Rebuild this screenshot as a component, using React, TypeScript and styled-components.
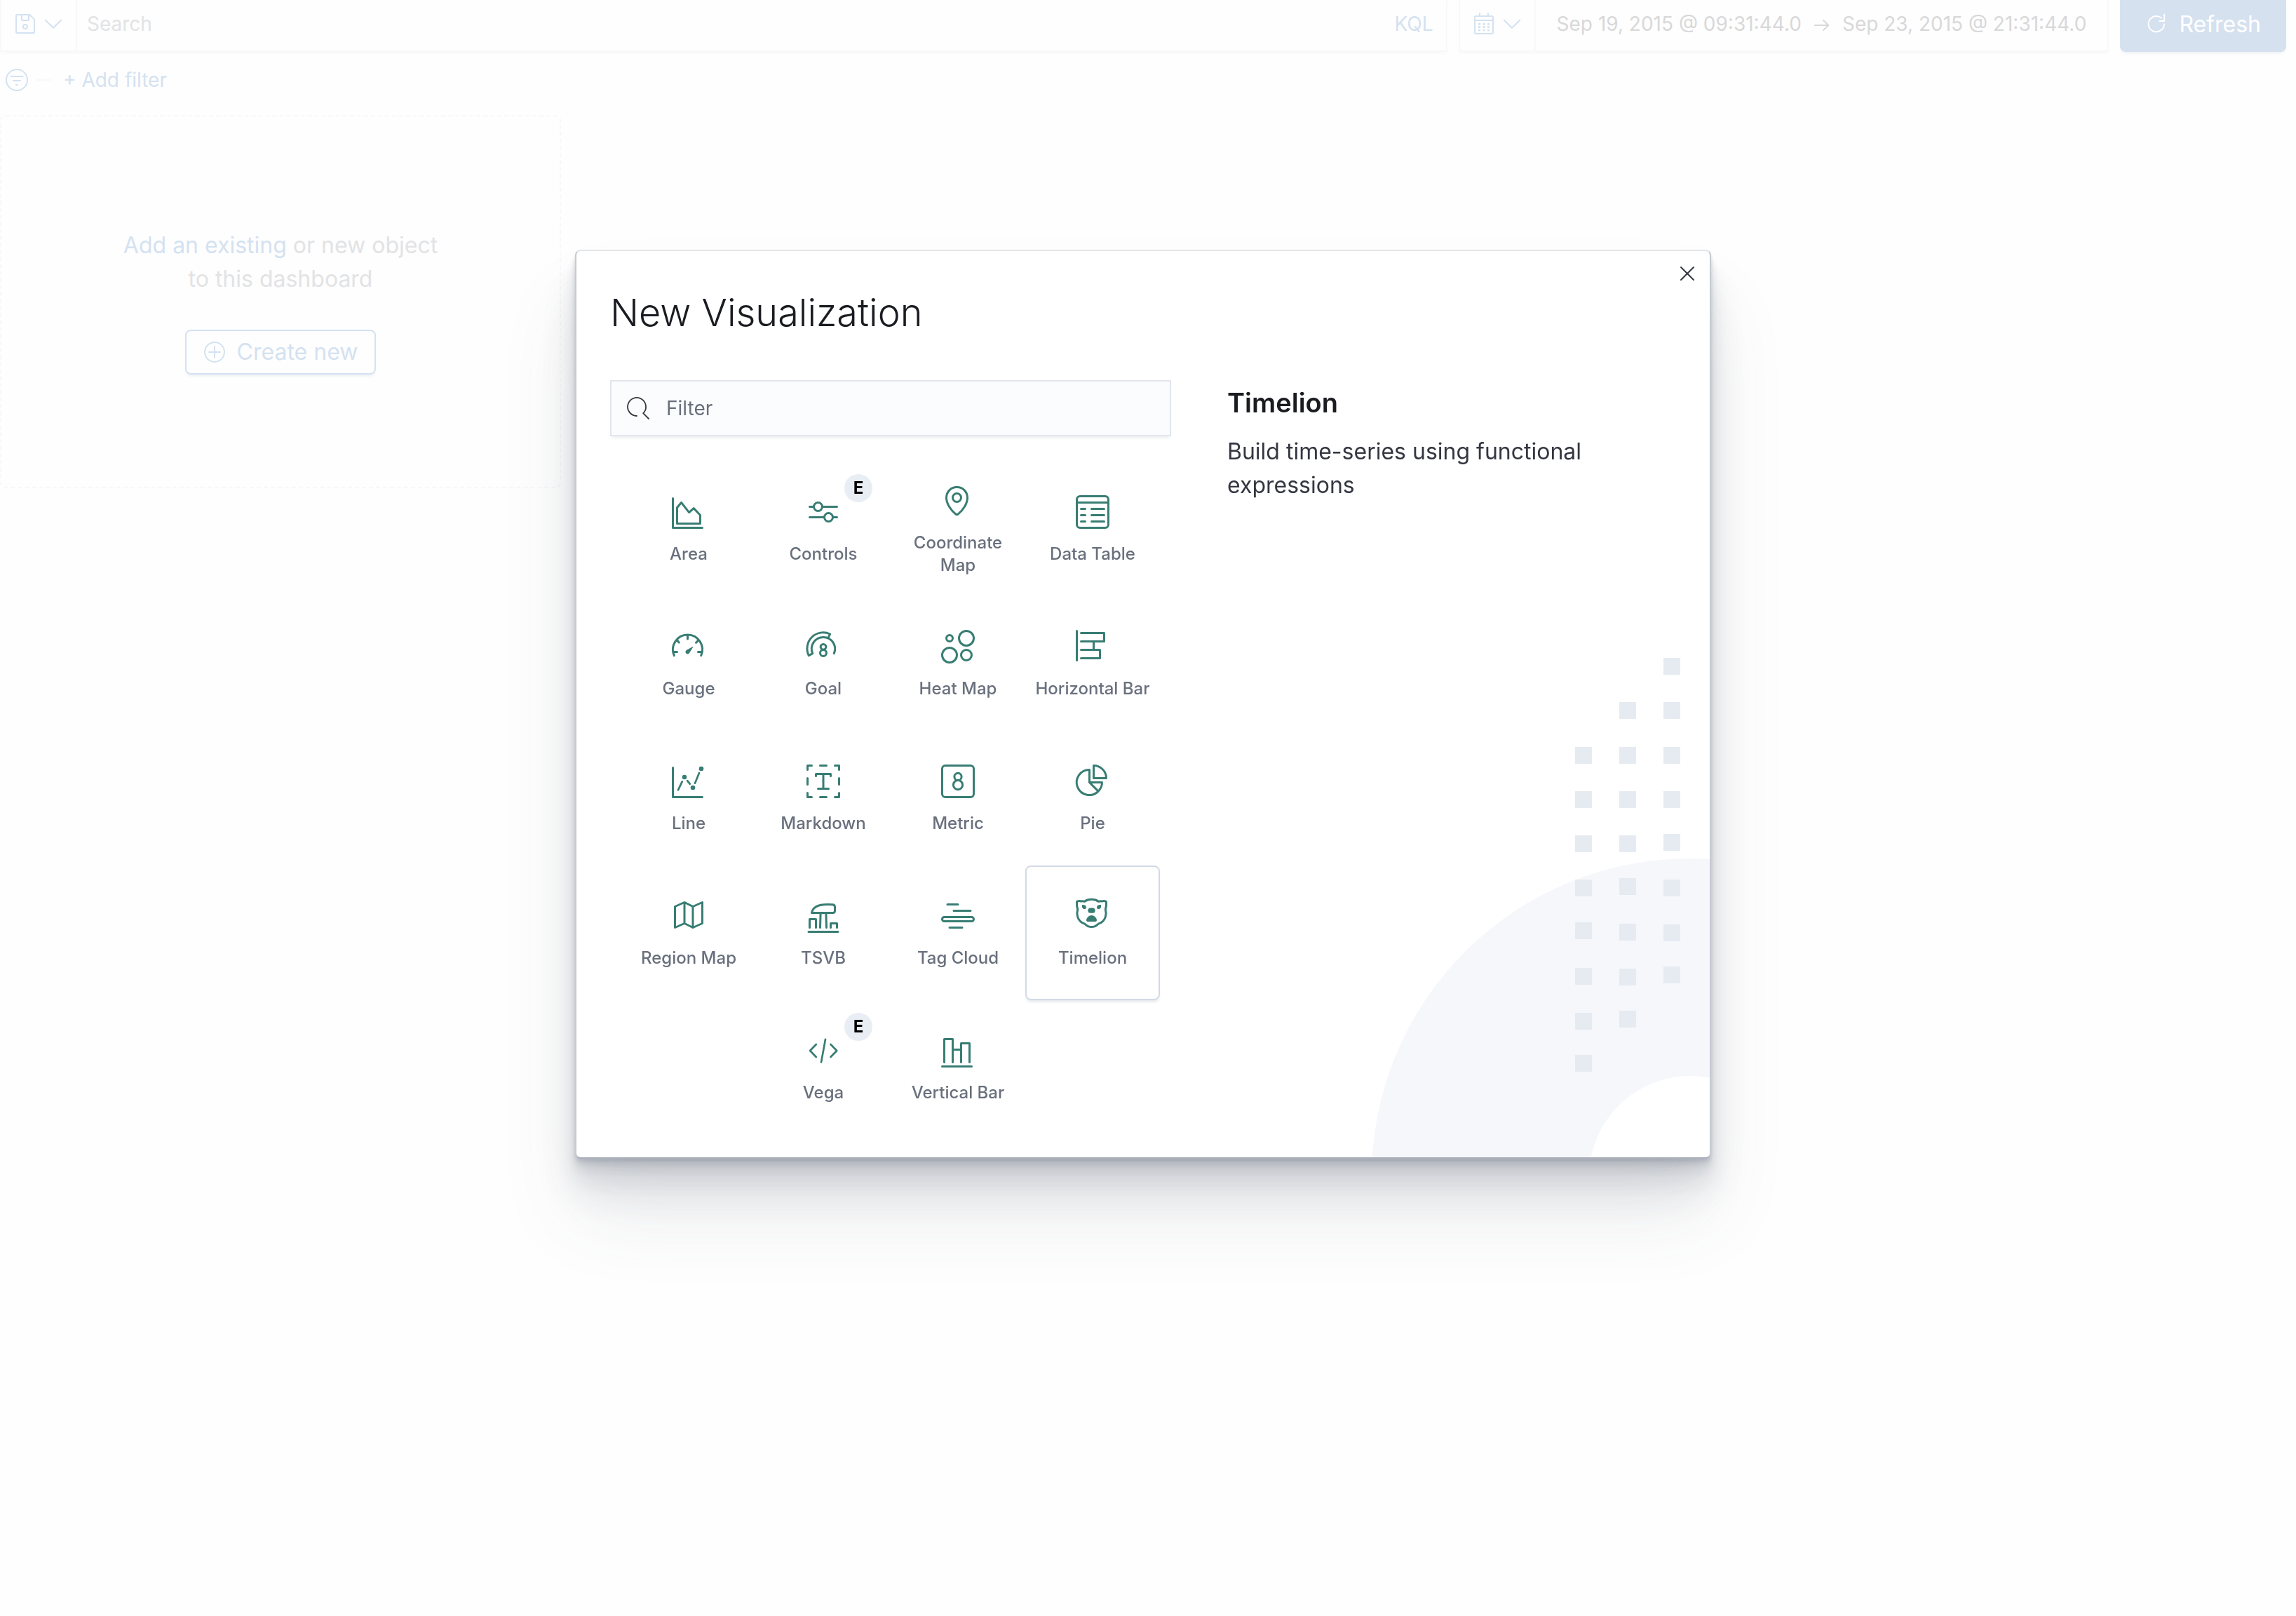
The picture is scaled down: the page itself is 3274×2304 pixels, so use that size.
import React, { useState } from "react";
import styled, { createGlobalStyle } from "styled-components";

const color = {
  page: "#fefefe",
  faintBorder: "#f8f8f9",
  fadedBlue: "#d4e2f1",
  fadedText: "#e2e3e5",
  fadedDate: "#d8d8d9",
  title: "#1a1c21",
  text: "#343741",
  subdued: "#69707d",
  teal: "#387d73",
  fieldBorder: "#e4e6ee",
};

const GlobalStyle = createGlobalStyle`
  *, *::before, *::after { box-sizing: border-box; }
  body {
    margin: 0;
    background: ${color.page};
    color: ${color.text};
    font-family: Inter, "Liberation Sans", sans-serif;
    font-size: 28px;
  }
  button, input { font: inherit; color: inherit; }
  button { background: none; border: 0; padding: 0; cursor: pointer; }
  h1, h2, p, ul { margin: 0; padding: 0; }
  ul { list-style: none; }
`;

/* ---------- Page behind the dialog ---------- */

const Page = styled.div`
  min-height: 100vh;
  padding-right: 14px;
`;

const QueryBar = styled.div`
  display: flex;
  gap: 16px;
  height: 74px;
`;

const Group = styled.div`
  display: flex;
  border: 2px solid ${color.faintBorder};
  border-top: 0;
  box-shadow: 0 4px 4px -2px rgba(150, 150, 160, 0.06);
`;

const SearchGroup = styled(Group)`
  flex: 1;
`;

const DateGroup = styled(Group)`
  flex: none;
`;

const MenuTrigger = styled.button`
  display: flex;
  align-items: center;
  gap: 8px;
  padding: 0 16px 4px 18px;
  border-right: 2px solid ${color.faintBorder};
  color: ${color.fadedBlue};
`;

const SearchInput = styled.input`
  flex: 1;
  min-width: 0;
  border: 0;
  outline: 0;
  background: none;
  padding: 0 14px 4px;
  &::placeholder { color: ${color.fadedText}; opacity: 1; }
`;

const LanguageButton = styled.button`
  padding: 0 18px 4px;
  color: ${color.fadedBlue};
`;

const DateRange = styled.div`
  display: flex;
  align-items: center;
  justify-content: center;
  gap: 18px;
  padding: 0 30px 4px;
  color: ${color.fadedDate};
`;

const RefreshButton = styled.button`
  display: flex;
  align-items: center;
  justify-content: center;
  gap: 16px;
  flex: none;
  padding: 0 36px 6px;
  border-radius: 0 0 8px 8px;
  background: #d5e1ef;
  color: #fff;
  font-size: 32px;
  box-shadow: 0 4px 4px -2px rgba(120, 140, 170, 0.12);
`;

const FilterBar = styled.div`
  display: flex;
  align-items: center;
  height: 80px;
  margin-bottom: 10px;
  padding-left: 8px;
  gap: 12px;
  color: ${color.fadedBlue};
`;

const IconButton = styled.button`
  display: flex;
`;

const FilterRule = styled.span`
  width: 20px;
  height: 2px;
  background: ${color.faintBorder};
`;

const AddFilterButton = styled.button`
  margin-left: 6px;
`;

const EmptyPanel = styled.section`
  display: flex;
  flex-direction: column;
  align-items: center;
  justify-content: center;
  gap: 48px;
  width: 800px;
  max-width: 100%;
  height: 532px;
  border: 2px dashed ${color.faintBorder};
  border-radius: 8px;
  font-size: 32px;
  line-height: 48px;
  color: ${color.fadedText};
`;

const EmptyText = styled.p`
  text-align: center;
`;

const FadedLink = styled.a`
  color: ${color.fadedBlue};
  text-decoration: none;
`;

const CreateButton = styled.button`
  display: flex;
  align-items: center;
  gap: 16px;
  height: 64px;
  padding: 0 24px;
  border: 2px solid ${color.fadedBlue};
  border-radius: 8px;
  color: ${color.fadedBlue};
  box-shadow: 0 4px 4px -2px rgba(120, 140, 170, 0.15);
`;

/* ---------- Dialog ---------- */

const Overlay = styled.div`
  position: fixed;
  inset: 0;
  display: flex;
  align-items: center;
  justify-content: center;
  padding: 0 14px 296px 0;
`;

const Dialog = styled.div`
  position: relative;
  width: 1620px;
  max-width: 100%;
  padding: 56px 48px 32px;
  background: #fff;
  border: 2px solid #c6cad1;
  border-top-color: #e3e4e8;
  border-bottom-color: #aaafba;
  border-radius: 8px;
  box-shadow:
    0 80px 112px rgba(65, 78, 101, 0.1),
    0 48px 64px rgba(65, 78, 101, 0.1),
    0 32px 32px rgba(65, 78, 101, 0.1),
    0 16px 16px rgba(65, 78, 101, 0.1),
    0 8px 8px rgba(65, 78, 101, 0.1),
    0 4px 4px rgba(65, 78, 101, 0.1);
`;

const Backdrop = styled.svg`
  position: absolute;
  right: 0;
  bottom: 0;
  border-bottom-right-radius: 6px;
`;

const CloseButton = styled.button`
  position: absolute;
  top: 8px;
  right: 8px;
  display: grid;
  place-items: center;
  width: 48px;
  height: 48px;
`;

const DialogTitle = styled.h1`
  position: relative;
  margin-bottom: 64px;
  font-size: 54px;
  font-weight: 300;
  line-height: 64px;
  color: ${color.title};
`;

const DialogBody = styled.div`
  position: relative;
  display: flex;
  gap: 80px;
`;

const Picker = styled.div`
  flex: none;
  width: 800px;
`;

const FilterField = styled.label`
  display: flex;
  align-items: center;
  gap: 24px;
  height: 80px;
  margin-bottom: 36px;
  padding-left: 22px;
  border: 2px solid ${color.fieldBorder};
  background: #fbfcfd;
  box-shadow: 0 4px 4px -2px rgba(152, 162, 179, 0.2);
`;

const FilterInput = styled.input`
  flex: 1;
  min-width: 0;
  height: 100%;
  padding: 0;
  border: 0;
  outline: 0;
  background: none;
  &::placeholder { color: ${color.subdued}; opacity: 1; }
`;

const TypeList = styled.ul`
  display: flex;
  flex-wrap: wrap;
  justify-content: center;
  padding: 0 16px;
`;

const TypeButton = styled.button<{ $selected: boolean }>`
  position: relative;
  display: flex;
  flex-direction: column;
  align-items: center;
  justify-content: center;
  gap: 20px;
  width: 192px;
  height: 192px;
  padding: 4px 12px 0;
  border: 2px solid ${(p) => (p.$selected ? "#d3dae6" : "transparent")};
  border-radius: 8px;
  box-shadow: ${(p) => (p.$selected ? "0 4px 4px -2px rgba(152, 162, 179, 0.3)" : "none")};
  color: ${color.teal};
`;

const TypeLabel = styled.span`
  font-size: 24px;
  font-weight: 500;
  line-height: 32px;
  color: ${color.subdued};
`;

const WideLabel = styled(TypeLabel)`
  white-space: nowrap;
`;

const Badge = styled.span`
  position: absolute;
  top: 16px;
  right: 24px;
  width: 40px;
  height: 40px;
  border-radius: 50%;
  background: #e9edf4;
  color: #000;
  font-size: 24px;
  font-weight: 700;
  line-height: 40px;
  text-align: center;
`;

const Details = styled.section`
  flex: 1;
  padding-top: 10px;
`;

const DetailsTitle = styled.h2`
  margin-bottom: 24px;
  font-size: 38px;
  font-weight: 600;
  line-height: 44px;
  color: ${color.title};
`;

const DetailsText = styled.p`
  font-size: 32px;
  line-height: 48px;
`;

/* ---------- Icons, all on a 16-unit grid ---------- */

const IconSvg = styled.svg`
  display: block;
  flex: none;
  overflow: visible;
  fill: none;
  stroke: currentColor;
  stroke-linecap: round;
  stroke-linejoin: round;
  .solid { fill: currentColor; stroke: none; }
`;

function Icon({ size = 32, children }: { size?: number; children: React.ReactNode }) {
  return (
    <IconSvg width={size} height={size} viewBox="0 0 16 16" aria-hidden="true">
      {children}
    </IconSvg>
  );
}

const Chevron = () => <Icon><path d="M2.4 5.4 8 10.9l5.6-5.5" /></Icon>;

type VisType = { name: string; icon: React.ReactNode; experimental?: boolean; wrap?: boolean };

const visTypes: VisType[] = [
  { name: "Area", icon: <path d="M.5 1.5v14h14M2.5 5.9l2-2.4 3.7 4.7 2.2-2 3.1 3.3v4h-11z" /> },
  {
    name: "Controls",
    experimental: true,
    icon: (
      <>
        <circle cx="5.5" cy="5.5" r="2" />
        <circle cx="10.5" cy="10.5" r="2" />
        <path d="M1.5 5.5h2M7.5 5.5h7M1.5 10.5h7M12.5 10.5h2" />
      </>
    ),
  },
  {
    name: "Coordinate Map",
    wrap: true,
    icon: (
      <>
        <path d="M7.5 1.5c3 0 5 2.4 5 5.1 0 2.7-2.1 5.9-4.3 7.6-.4.4-1 .4-1.4 0-2.2-1.7-4.3-4.9-4.3-7.6 0-2.7 2-5.1 5-5.1z" />
        <circle cx="7.5" cy="6.5" r="2" />
      </>
    ),
  },
  {
    name: "Data Table",
    icon: (
      <>
        <rect x=".5" y=".5" width="15" height="15" rx="1.5" />
        <path d="M.5 3.5h15M2.5 6.5h2M7.5 6.5h6M2.5 9.5h2M7.5 9.5h6M2.5 12.5h2M7.5 12.5h6" />
      </>
    ),
  },
  {
    name: "Gauge",
    icon: (
      <>
        <path d="M1.1 12.2A7 7 0 1 1 13.9 12.2M7.5 2.5v1.8M.7 10.5h1.8M14.3 10.5h-1.8M2.5 4.9l.9 1.1M12.6 5l-1.1 1.1" />
        <path className="solid" d="M9.9 8 6.9 9.7A1 1 0 1 0 8.3 11.1L10.1 8.2z" />
      </>
    ),
  },
  {
    name: "Goal",
    icon: (
      <>
        <path d="M13.1 11.2A5.55 5.55 0 1 0 2.9 11.2L1.1 12.2A7.6 7.6 0 0 1 11.2 2l-.9 1.8" />
        <circle cx="8" cy="8.1" r="1.3" />
        <circle cx="8" cy="11" r="1.5" />
      </>
    ),
  },
  {
    name: "Heat Map",
    icon: (
      <>
        <circle cx="4" cy="4" r="1.5" />
        <circle cx="12" cy="4" r="3.5" />
        <circle cx="4" cy="12" r="3.5" />
        <circle cx="12" cy="12" r="2.5" />
      </>
    ),
  },
  { name: "Horizontal Bar", icon: <path d="M.5.5v14M2.5 1.5h11v4h-11M8.5 5.5v4M2.5 9.5h9v4h-9" /> },
  {
    name: "Line",
    icon: (
      <>
        <path d="M.5 1.5v14h14" />
        <path strokeWidth=".9" d="M3 12.1l1.9-4M7.4 7.7l1.2 1.5M11 8.9l2-4.9" />
        <circle className="solid" cx="6" cy="6" r="1.1" />
        <circle className="solid" cx="10" cy="11" r="1.1" />
        <circle className="solid" cx="14" cy="2" r="1.1" />
      </>
    ),
  },
  {
    name: "Markdown",
    icon: (
      <path d="M.5 2.5v-2h2M13.5.5h2v2M15.5 13.5v2h-2M2.5 15.5h-2v-2M6.5.5h3M6.5 15.5h3M.5 6.5v3M15.5 6.5v3M4.5 5.5v-1h7v1M8 4.5v7M5.5 11.5h5" />
    ),
  },
  {
    name: "Metric",
    icon: (
      <>
        <rect x=".5" y=".5" width="15" height="15" rx="1.5" />
        <circle cx="8" cy="5.8" r="1.7" />
        <circle cx="8" cy="9.7" r="2.2" />
      </>
    ),
  },
  {
    name: "Pie",
    icon: <path d="M6.5 2.5a6 6 0 1 0 4.2 10.2L6.5 8.5zM6.5 8.5h6a6 6 0 0 1-1.8 4.2M8.5.5a6 6 0 0 1 6 6h-6z" />,
  },
  { name: "Region Map", icon: <path d="M1.5 3.5l4.5-2 4 2 4.5-2v10l-4.5 2-4-2-4.5 2zM6 1.5v10M10 3.5v10" /> },
  {
    name: "TSVB",
    icon: (
      <path d="M1 15.5h14M2.5 6.5h10q1 0 1-1V3.7q0-.9-1-1.1C6.5 2.1 3 3.3 2.5 6.5M6.7 6.8l-.2 6.7M9.3 6.8l.2 6.7M1.5 13.5v-4h3v4M11.5 13.5v-2h3v2" />
    ),
  },
  {
    name: "Tag Cloud",
    icon: (
      <>
        <path d="M3 2.5h5M6 5.5h8M4 13.5h6" />
        <rect x=".5" y="8.5" width="15" height="2" rx="1" />
      </>
    ),
  },
  {
    name: "Timelion",
    icon: (
      <>
        <path d="M7.5.1c1.3 0 2.4.3 3.3 1C11.6.8 12 .8 12.5 1c.6-.2 1.3-.2 2 .2.1 1.3 0 2.5-.4 3.7.6 2 .2 4.7-2 6.2-.8.3-1.3.5-1.7.9-.7.8-1.6 1.2-2.9 1.2s-2.2-.4-2.9-1.2c-.4-.4-.9-.6-1.7-.9C.7 9.6.3 6.9.9 4.9.5 3.7.4 2.5.5 1.2c.7-.4 1.4-.4 2-.2.5-.2.9-.2 1.7.1.9-.7 2-1 3.3-1z" />
        <path
          className="solid"
          d="M3 2.7c1-.1 2 .3 2 1.1-.1.7-.5.9-1 .9-.8 0-1.200-1-1-2zM12 2.700c-1-.1-2 .3-2 1.100.1.700.5.900 1 .900.8 0 1.200-1 1-2z"
        />
        <rect className="solid" x="5.8" y="4.2" width="3.4" height="2.4" rx="1.2" />
        <path className="solid" d="M5 9.9c.2-1.1 1.3-2.2 2.5-2.2s2.3 1.1 2.5 2.2c0 .5-.3.8-.8.8H5.800c-.5 0-.8-.3-.8-.8z" />
      </>
    ),
  },
  {
    name: "Vega",
    experimental: true,
    icon: <path strokeWidth=".9" d="M4.6 5 1.7 8l2.9 3M11.5 5l2.9 3-2.9 3M9 2.600 7 13.500" />,
  },
  { name: "Vertical Bar", icon: <path d="M.5 15.5h14M1.5 13.5v-11h4v11M5.5 7.5h4M9.5 13.5v-9h4v9" /> },
];

/* Columns of squares in the dialog's corner artwork: x, then the top of each square. */
const squares: [number, number[]][] = [
  [300, [129, 192, 255, 318, 379, 444, 508, 568]],
  [363, [65, 129, 192, 255, 316, 381, 445, 505]],
  [426, [2, 65, 129, 192, 253, 318, 382, 442]],
];

function CornerArt() {
  return (
    <Backdrop width="492" height="714" viewBox="0 0 492 714" aria-hidden="true">
      <path
        fill="#f5f7fb"
        fillRule="evenodd"
        d="M464 288a454 454 0 1 0 0 908a454 454 0 1 0 0-908zM464 598a144 144 0 1 1 0 288a144 144 0 1 1 0-288z"
      />
      {squares.map(([x, tops]) =>
        tops.map((y) => <rect key={`${x}-${y}`} x={x} y={y} width="24" height="24" fill="#e6ebf2" />)
      )}
    </Backdrop>
  );
}

export default function App() {
  const [selected, setSelected] = useState("Timelion");

  return (
    <>
      <GlobalStyle />
      <Page>
        <QueryBar>
          <SearchGroup>
            <MenuTrigger aria-label="Saved queries">
              <Icon>
                <path d="M2 1.5h9.2l3.3 3.3V14a.5.5 0 0 1-.5.5H2a.5.5 0 0 1-.5-.5V2a.5.5 0 0 1 .5-.5zM5.500 1.500V5q0 .5.5.5h4q.5 0 .5-.5V1.500" />
                <circle cx="8" cy="10" r="1.5" />
              </Icon>
              <Chevron />
            </MenuTrigger>
            <SearchInput aria-label="Search" placeholder="Search" />
            <LanguageButton>KQL</LanguageButton>
          </SearchGroup>
          <DateGroup>
            <MenuTrigger aria-label="Date quick select">
              <Icon>
                <rect x="1.5" y="2.5" width="13" height="12.5" rx="1" />
                <path d="M1.5 5.5h13M5 .5v2M11 .5v2" />
                <path
                  strokeWidth="1.3"
                  strokeLinecap="butt"
                  d="M4 8.2h1.5M7.3 8.2h1.5M10.5 8.2H12M4 10.3h1.5M7.3 10.3h1.5M10.5 10.3H12M4 12.5h1.5M7.3 12.5h1.5M10.5 12.5H12"
                />
              </Icon>
              <Chevron />
            </MenuTrigger>
            <DateRange>
              <button>Sep 19, 2015 @ 09:31:44.0</button>
              <IconSvg width="22" height="22" viewBox="0 0 11 11" aria-hidden="true">
                <path d="M.5 6.5h9.500M6.500 3l3.700 3.500L6.500 10" />
              </IconSvg>
              <button>Sep 23, 2015 @ 21:31:44.0</button>
            </DateRange>
          </DateGroup>
          <RefreshButton>
            <Icon>
              <path d="M13.5 8.2A5.6 5.6 0 1 1 11.5 3.8M13.6 1.2V6h-3.4" />
            </Icon>
            Refresh
          </RefreshButton>
        </QueryBar>

        <FilterBar>
          <IconButton aria-label="Filter options">
            <Icon>
              <circle cx="8" cy="8" r="7.5" />
              <path d="M3.7 5.5h8.6M5.5 8.5h5M7.5 11.5h1" />
            </Icon>
          </IconButton>
          <FilterRule />
          <AddFilterButton>+ Add filter</AddFilterButton>
        </FilterBar>

        <EmptyPanel>
          <EmptyText>
            <FadedLink href="#add">Add an existing</FadedLink> <span>or new object</span>
            <br />
            <span>to this dashboard</span>
          </EmptyText>
          <CreateButton>
            <Icon>
              <circle cx="8" cy="8" r="7" />
              <path d="M8 4v8M4 8h8" />
            </Icon>
            Create new
          </CreateButton>
        </EmptyPanel>
      </Page>

      <Overlay>
        <Dialog role="dialog" aria-modal="true" aria-labelledby="dialog-title">
          <CornerArt />
          <DialogTitle id="dialog-title">New Visualization</DialogTitle>
          <DialogBody>
            <Picker>
              <FilterField>
                <Icon>
                  <path strokeWidth=".9" d="M7 13.5A6.500 6.500 0 1 1 11.600 11.600L15.500 15.500" />
                </Icon>
                <FilterInput type="text" aria-label="Filter" placeholder="Filter" />
              </FilterField>
              <TypeList>
                {visTypes.map(({ name, icon, experimental, wrap }) => {
                  const Label = wrap ? TypeLabel : WideLabel;
                  return (
                    <li key={name}>
                      <TypeButton
                        $selected={name === selected}
                        aria-pressed={name === selected}
                        onClick={() => setSelected(name)}
                      >
                        {experimental && <Badge>E</Badge>}
                        <Icon size={48}>{icon}</Icon>
                        <Label>{name}</Label>
                      </TypeButton>
                    </li>
                  );
                })}
              </TypeList>
            </Picker>
            <Details>
              <DetailsTitle>Timelion</DetailsTitle>
              <DetailsText>Build time-series using functional expressions</DetailsText>
            </Details>
          </DialogBody>
          <CloseButton aria-label="Close">
            <IconSvg width="20" height="20" viewBox="0 0 20 20" strokeWidth="2">
              <path d="M1 1l18 18M19 1 1 19" />
            </IconSvg>
          </CloseButton>
        </Dialog>
      </Overlay>
    </>
  );
}
